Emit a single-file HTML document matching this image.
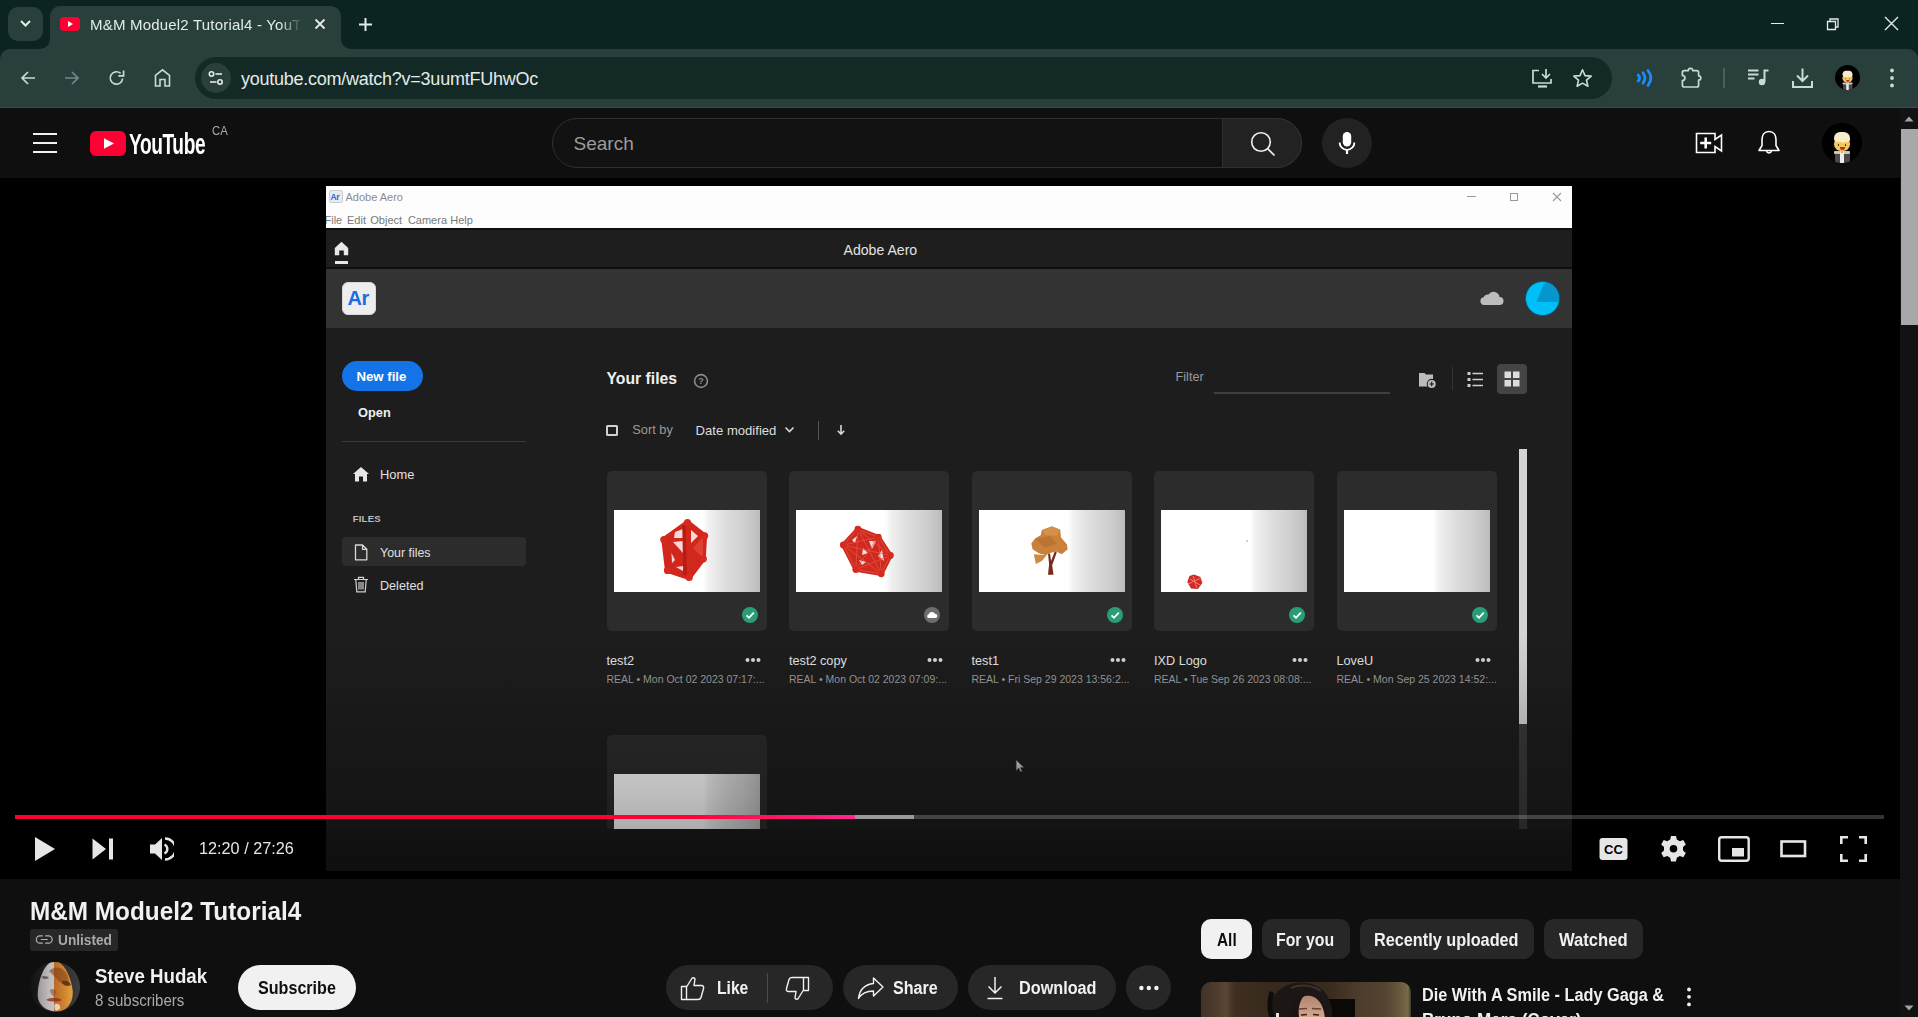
<!DOCTYPE html>
<html><head><meta charset="utf-8">
<style>
*{margin:0;padding:0;box-sizing:border-box}
html,body{width:1918px;height:1017px;overflow:hidden;background:#0f0f0f;font-family:"Liberation Sans",sans-serif}
.a{position:absolute}
svg{display:block}
.t{white-space:nowrap;line-height:1}
</style></head><body>
<div class="a" style="left:0px;top:0px;width:1918px;height:60px;background:#0c2421;"></div>
<div class="a" style="left:50px;top:6px;width:291px;height:44px;background:#293f3c;border-radius:10px 10px 0 0;"></div>
<div class="a" style="left:40px;top:39px;width:10px;height:10px;background:#293f3c;"></div>
<div class="a" style="left:30px;top:29px;width:20px;height:20px;background:#0c2421;border-radius:0 0 10px 0;"></div>
<div class="a" style="left:8px;top:7px;width:35px;height:34px;background:#293f3c;border-radius:10px;"></div>
<svg class="a" style="left:19px;top:19px" width="13" height="9" viewBox="0 0 13 9"><path d="M2 2 L6.5 6.5 L11 2" fill="none" stroke="#e3ebe9" stroke-width="2"/></svg>
<div class="a" style="left:341px;top:39px;width:10px;height:10px;background:#293f3c;"></div>
<div class="a" style="left:341px;top:29px;width:20px;height:20px;background:#0c2421;border-radius:0 0 0 10px;"></div>
<div class="a" style="left:60px;top:17px;width:20px;height:14px;background:#ff0033;border-radius:4px;"></div>
<svg class="a" style="left:60px;top:17px" width="20" height="14" viewBox="0 0 20 14"><path d="M8 4 L13 7 L8 10 Z" fill="#fff"/></svg>
<div class="a t" style="left:90px;top:17.30px;font-size:15px;color:#e3ebe9;letter-spacing:0.2px;width:212px;overflow:hidden;-webkit-mask-image:linear-gradient(to right,#000 190px,transparent 212px)">M&amp;M Moduel2 Tutorial4 - YouTube</div>
<svg class="a" style="left:313px;top:17px" width="14" height="14" viewBox="0 0 14 14"><path d="M2.5 2.5 L11.5 11.5 M11.5 2.5 L2.5 11.5" stroke="#e3ebe9" stroke-width="1.8"/></svg>
<svg class="a" style="left:358px;top:17px" width="15" height="15" viewBox="0 0 15 15"><path d="M7.5 1 V14 M1 7.5 H14" stroke="#e3ebe9" stroke-width="2"/></svg>
<div class="a" style="left:1771px;top:23px;width:13px;height:1.3px;background:#e3ebe9;"></div>
<svg class="a" style="left:1825px;top:16px" width="16" height="16" viewBox="0 0 16 16"><path d="M2.5 5.5 h8 v8 h-8 z M5 5.5 V3 h8 v8 h-2.5" fill="none" stroke="#e3ebe9" stroke-width="1.3"/></svg>
<svg class="a" style="left:1884px;top:16px" width="15" height="15" viewBox="0 0 15 15"><path d="M1 1 L14 14 M14 1 L1 14" stroke="#e3ebe9" stroke-width="1.4"/></svg>
<div class="a" style="left:0px;top:49px;width:1918px;height:59px;background:#293f3c;border-radius:10px 10px 0 0;"></div>
<div class="a" style="left:0px;top:107px;width:1918px;height:1px;background:#3a4c49;"></div>
<svg class="a" style="left:19px;top:69px" width="18" height="18" viewBox="0 0 18 18"><path d="M16 9 H3 M9 3 L3 9 L9 15" fill="none" stroke="#c9dad6" stroke-width="1.7"/></svg>
<svg class="a" style="left:63px;top:69px" width="18" height="18" viewBox="0 0 18 18"><path d="M2 9 H15 M9 3 L15 9 L9 15" fill="none" stroke="#73878a" stroke-width="1.7"/></svg>
<svg class="a" style="left:108px;top:69px" width="18" height="18" viewBox="0 0 18 18"><path d="M14.6 9.5 A6.2 6.2 0 1 1 12.6 4.4" fill="none" stroke="#c9dad6" stroke-width="1.7"/><path d="M15.6 1.5 V6.8 H10.3" fill="none" stroke="#c9dad6" stroke-width="1.7"/></svg>
<svg class="a" style="left:153px;top:68px" width="19" height="20" viewBox="0 0 19 20"><path d="M2.5 18 V7.5 L9.5 1.8 L16.5 7.5 V18 H12 V11.5 H7 V18 Z" fill="none" stroke="#c9dad6" stroke-width="1.6"/></svg>
<div class="a" style="left:195px;top:57px;width:1417px;height:42px;background:#132926;border-radius:21px;"></div>
<div class="a" style="left:201px;top:63px;width:30px;height:30px;background:#293f3c;border-radius:15px;"></div>
<svg class="a" style="left:206px;top:68px" width="20" height="20" viewBox="0 0 20 20"><circle cx="5.5" cy="6" r="2.2" fill="none" stroke="#e3ebe9" stroke-width="1.6"/><path d="M9.5 6 H16" stroke="#e3ebe9" stroke-width="1.6"/><circle cx="14" cy="14" r="2.2" fill="none" stroke="#e3ebe9" stroke-width="1.6"/><path d="M4 14 H10.5" stroke="#e3ebe9" stroke-width="1.6"/></svg>
<div class="a t" style="left:241px;top:69.66px;font-size:18px;color:#e3ebe9;letter-spacing:-0.25px">youtube.com/watch?v=3uumtFUhwOc</div>
<svg class="a" style="left:1531px;top:68px" width="23" height="21" viewBox="0 0 23 21"><path d="M8 2.5 H2 V15 H20 V11" fill="none" stroke="#c9dad6" stroke-width="1.7"/><path d="M15 1 V9.5 M11 6 L15 10 L19 6" fill="none" stroke="#c9dad6" stroke-width="1.7"/><path d="M7 18.5 H16" stroke="#c9dad6" stroke-width="2.2"/></svg>
<svg class="a" style="left:1572px;top:68px" width="21" height="20" viewBox="0 0 21 20"><path d="M10.5 1.8 L13 7.6 L19.2 8.1 L14.5 12.2 L15.9 18.3 L10.5 15.1 L5.1 18.3 L6.5 12.2 L1.8 8.1 L8 7.6 Z" fill="none" stroke="#c9dad6" stroke-width="1.6" stroke-linejoin="round"/></svg>
<svg class="a" style="left:1635px;top:69px" width="20" height="18" viewBox="0 0 20 18"><path d="M3.2 6 Q6 9 3.2 12" fill="none" stroke="#1a8cff" stroke-width="2.8" stroke-linecap="round"/><path d="M8 3.8 Q11.8 9 8 14.2" fill="none" stroke="#1a8cff" stroke-width="2.8" stroke-linecap="round"/><path d="M13 1.5 Q18.6 9 13 16.5" fill="none" stroke="#1a8cff" stroke-width="2.8" stroke-linecap="round"/></svg>
<svg class="a" style="left:1680px;top:66px" width="23" height="22" viewBox="0 0 23 22"><path d="M4.2 4.6 H8.3 A2.2 2.2 0 0 1 12.7 4.6 H16.8 Q18.6 4.6 18.6 6.4 V9.8 A2.2 2.2 0 0 1 18.6 14.2 V19.2 Q18.6 21 16.8 21 H4.2 Q2.4 21 2.4 19.2 V14.5 A2.4 2.4 0 0 0 2.4 9.5 V6.4 Q2.4 4.6 4.2 4.6 Z" fill="none" stroke="#c9dad6" stroke-width="1.7" stroke-linejoin="round"/></svg>
<div class="a" style="left:1723px;top:68px;width:2px;height:20px;background:#4b5e5b;"></div>
<svg class="a" style="left:1747px;top:68px" width="22" height="18" viewBox="0 0 22 18"><path d="M1 2.5 H11.5 M1 6.5 H11.5 M1 10.5 H7.5" stroke="#c9dad6" stroke-width="2"/><path d="M17.5 14 V2.5 H21.5" fill="none" stroke="#c9dad6" stroke-width="2"/><circle cx="15" cy="14" r="3.2" fill="#c9dad6"/></svg>
<svg class="a" style="left:1791px;top:67px" width="23" height="22" viewBox="0 0 23 22"><path d="M11.5 1.5 V14 M6 8.5 L11.5 14 L17 8.5" fill="none" stroke="#c9dad6" stroke-width="2"/><path d="M2 14 V20 H21 V14" fill="none" stroke="#c9dad6" stroke-width="2"/></svg>
<div class="a" style="left:1835px;top:65px;width:40px;height:40px;border-radius:50%;background:#000;overflow:hidden;transform:scale(0.625);transform-origin:0 0">
  <div class="a" style="left:12.5px;top:31px;width:15.5px;height:10px;background:#4c4a44"></div>
  <div class="a" style="left:12px;top:27.7px;width:16px;height:3.6px;border-radius:1px;background:#c9c7c0"></div>
  <div class="a" style="left:18.2px;top:28px;width:3.8px;height:13px;background:#ededed"></div>
  <div class="a" style="left:19px;top:27.5px;width:2.2px;height:2px;background:#f0a830"></div>
  <div class="a" style="left:12px;top:15px;width:16px;height:12.8px;border-radius:45% 45% 50% 50%;background:#f6c85a"></div>
  <div class="a" style="left:12px;top:9px;width:16px;height:9.5px;border-radius:8px 8px 3px 5px;background:#f6ecc8"></div>
  <div class="a" style="left:19px;top:16px;width:3px;height:3.5px;border-radius:0 0 2px 2px;background:#f6ecc8"></div>
  <div class="a" style="left:15.6px;top:21px;width:1.6px;height:1.6px;border-radius:50%;background:#222"></div>
  <div class="a" style="left:22.8px;top:21px;width:1.6px;height:1.6px;border-radius:50%;background:#222"></div>
  <div class="a" style="left:18.2px;top:24.3px;width:5.2px;height:2.9px;border-radius:0 0 3px 3px;background:#c02838"></div>
</div>
<svg class="a" style="left:1886px;top:67px" width="12" height="22" viewBox="0 0 12 22"><circle cx="6" cy="3.5" r="1.9" fill="#c9dad6"/><circle cx="6" cy="11" r="1.9" fill="#c9dad6"/><circle cx="6" cy="18.5" r="1.9" fill="#c9dad6"/></svg>
<div class="a" style="left:0px;top:108px;width:1918px;height:70px;background:#0f0f0f;"></div>
<div class="a" style="left:33px;top:133px;width:24px;height:2px;background:#f1f1f1;"></div>
<div class="a" style="left:33px;top:142px;width:24px;height:2px;background:#f1f1f1;"></div>
<div class="a" style="left:33px;top:151px;width:24px;height:2px;background:#f1f1f1;"></div>
<div class="a" style="left:90px;top:131px;width:36px;height:25px;background:#ff0033;border-radius:6px;"></div>
<svg class="a" style="left:90px;top:131px" width="36" height="25" viewBox="0 0 36 25"><path d="M14 7.2 L24 12.5 L14 17.8 Z" fill="#fff"/></svg>
<div class="a t" style="left:129px;top:130.48px;font-size:29.2px;font-weight:bold;color:#fff;letter-spacing:-0.6px;transform:scaleX(0.655);transform-origin:left top">YouTube</div>
<div class="a t" style="left:211.70px;top:124.79px;font-size:12.06px;color:#aaa;transform:scaleX(0.9422);transform-origin:0 0;">CA</div>
<div class="a" style="left:552px;top:118px;width:750px;height:50px;border-radius:25px;border:1px solid #303030;background:#121212"></div>
<div class="a" style="left:1222px;top:118px;width:80px;height:50px;border-radius:0 25px 25px 0;border:1px solid #303030;background:#222222"></div>
<div class="a t" style="left:573.5px;top:133.92px;font-size:19px;color:#9c9c9c;">Search</div>
<svg class="a" style="left:1249px;top:130px" width="28" height="28" viewBox="0 0 28 28"><circle cx="12" cy="12" r="9.3" fill="none" stroke="#f1f1f1" stroke-width="1.6"/><path d="M18.7 18.7 L25.5 25.5" stroke="#f1f1f1" stroke-width="1.7"/></svg>
<div class="a" style="left:1322px;top:118px;width:50px;height:50px;background:#222222;border-radius:25px;"></div>
<svg class="a" style="left:1335px;top:130px" width="24" height="28" viewBox="0 0 24 28"><rect x="7.8" y="2" width="8.4" height="14.5" rx="4.2" fill="#fff"/><path d="M4.6 12.5 A7.4 7.4 0 0 0 19.4 12.5" fill="none" stroke="#fff" stroke-width="1.8"/><path d="M12 19.8 V24" stroke="#fff" stroke-width="2.2"/></svg>
<svg class="a" style="left:1695px;top:132px" width="29" height="22" viewBox="0 0 29 22"><path d="M1.5 1.5 H20 V7.5 L26.5 3 V19 L20 14.5 V20.5 H1.5 Z" fill="none" stroke="#fff" stroke-width="1.6"/><path d="M10.7 5.5 V16.5 M5.2 11 H16.2" stroke="#fff" stroke-width="2.6"/></svg>
<svg class="a" style="left:1757px;top:129px" width="24" height="28" viewBox="0 0 24 28"><path d="M12 2.5 C7 2.5 5 6.5 5 10.5 V16.5 L2 21.5 H22 L19 16.5 V10.5 C19 6.5 17 2.5 12 2.5 Z" fill="none" stroke="#fff" stroke-width="1.6" stroke-linejoin="round"/><path d="M9.5 22 A2.6 2.6 0 0 0 14.5 22" fill="none" stroke="#fff" stroke-width="1.6"/></svg>
<div class="a" style="left:1822px;top:123px;width:40px;height:40px;border-radius:50%;background:#000;overflow:hidden;transform:scale(1.0);transform-origin:0 0">
  <div class="a" style="left:12.5px;top:31px;width:15.5px;height:10px;background:#4c4a44"></div>
  <div class="a" style="left:12px;top:27.7px;width:16px;height:3.6px;border-radius:1px;background:#c9c7c0"></div>
  <div class="a" style="left:18.2px;top:28px;width:3.8px;height:13px;background:#ededed"></div>
  <div class="a" style="left:19px;top:27.5px;width:2.2px;height:2px;background:#f0a830"></div>
  <div class="a" style="left:12px;top:15px;width:16px;height:12.8px;border-radius:45% 45% 50% 50%;background:#f6c85a"></div>
  <div class="a" style="left:12px;top:9px;width:16px;height:9.5px;border-radius:8px 8px 3px 5px;background:#f6ecc8"></div>
  <div class="a" style="left:19px;top:16px;width:3px;height:3.5px;border-radius:0 0 2px 2px;background:#f6ecc8"></div>
  <div class="a" style="left:15.6px;top:21px;width:1.6px;height:1.6px;border-radius:50%;background:#222"></div>
  <div class="a" style="left:22.8px;top:21px;width:1.6px;height:1.6px;border-radius:50%;background:#222"></div>
  <div class="a" style="left:18.2px;top:24.3px;width:5.2px;height:2.9px;border-radius:0 0 3px 3px;background:#c02838"></div>
</div>
<div class="a" style="left:1900px;top:108px;width:18px;height:909px;background:#121212;"></div>
<svg class="a" style="left:1903px;top:115px" width="12" height="8" viewBox="0 0 12 8"><path d="M1.5 6.5 L6 1.5 L10.5 6.5 Z" fill="#a3a3a3"/></svg>
<div class="a" style="left:1901px;top:129px;width:17px;height:196px;background:#a8a8a8;"></div>
<svg class="a" style="left:1903px;top:1004px" width="12" height="8" viewBox="0 0 12 8"><path d="M1.5 1.5 L6 6.5 L10.5 1.5 Z" fill="#a3a3a3"/></svg>
<div class="a" style="left:0px;top:178px;width:1900px;height:701px;background:#000;"></div>
<div class="a" style="left:326px;top:186px;width:1246px;height:685px;background:#1d1d1d;"></div>
<div class="a" style="left:326px;top:186px;width:1246px;height:42px;background:#fdfdfd;"></div>
<div class="a" style="left:329px;top:190px;width:14px;height:13px;border-radius:2px;background:#e8eaee;border:1px solid #c8ccd2"></div>
<div class="a t" style="left:330.5px;top:192.80px;font-size:8.5px;color:#1a6fd8;font-weight:bold;letter-spacing:-0.3px">Ar</div>
<div class="a t" style="left:345.5px;top:191.99px;font-size:11px;color:#8c8c8c;">Adobe Aero</div>
<div class="a" style="left:326px;top:210px;width:150px;height:17px;overflow:hidden">
<div class="a t" style="left:-1.5px;top:5.19px;font-size:11px;color:#787878;">File</div>
<div class="a t" style="left:21px;top:5.19px;font-size:11px;color:#787878;">Edit</div>
<div class="a t" style="left:44.3px;top:5.19px;font-size:11px;color:#787878;">Object</div>
<div class="a t" style="left:81.9px;top:5.19px;font-size:11px;color:#787878;">Camera</div>
<div class="a t" style="left:124.2px;top:5.19px;font-size:11px;color:#787878;">Help</div>
</div>
<div class="a" style="left:1467px;top:196px;width:9px;height:1.2px;background:#9a9a9a;"></div>
<div class="a" style="left:1510px;top:193px;width:8px;height:8px;border:1.2px solid #9a9a9a"></div>
<svg class="a" style="left:1552px;top:192px" width="10" height="10" viewBox="0 0 10 10"><path d="M1 1 L9 9 M9 1 L1 9" stroke="#9a9a9a" stroke-width="1.1"/></svg>
<div class="a" style="left:326px;top:228px;width:1246px;height:2px;background:#101010;"></div>
<div class="a" style="left:326px;top:230px;width:1246px;height:37px;background:#1e1e1e;"></div>
<div class="a" style="left:326px;top:267px;width:1246px;height:2px;background:#0e0e0e;"></div>
<svg class="a" style="left:334px;top:241px" width="15" height="15" viewBox="0 0 15 15"><path d="M0.8 7 L7.5 0.8 L14.2 7 V14.2 H9.8 V9.5 H5.2 V14.2 H0.8 Z" fill="#e8e8e8"/></svg>
<div class="a" style="left:335px;top:261px;width:13px;height:3px;background:#e8e8e8;"></div>
<div class="a t" style="left:843.5px;top:243.06px;font-size:14.1px;color:#e2e2e2;">Adobe Aero</div>
<div class="a" style="left:326px;top:269px;width:1246px;height:59px;background:#333333;"></div>
<div class="a" style="left:342px;top:282px;width:34px;height:33px;border-radius:6px;background:#eeeeef;border:1px solid #d8d8da"></div>
<div class="a t" style="left:347.5px;top:288.07px;font-size:20px;color:#1b6fe0;font-weight:bold;letter-spacing:-0.5px">Ar</div>
<svg class="a" style="left:1479px;top:289px" width="25" height="17" viewBox="0 0 25 17"><path d="M4.5 16 A4 4 0 0 1 4.5 8.2 A4.5 4.5 0 0 1 9.5 5.5 A6 6 0 0 1 20.5 8 A4 4 0 0 1 20.5 16 Z" fill="#bdbdbd"/></svg>
<div class="a" style="left:1525px;top:281px;width:35px;height:35px;border-radius:50%;background:#00bff7;overflow:hidden;border:1px solid #0a5a78"><svg class="a" style="left:0;top:0" width="35" height="35" viewBox="0 0 35 35"><path d="M10.5 20 L18 1.5 L35 0 L35 20 Z" fill="#0496cc"/></svg></div>
<div class="a" style="left:342px;top:361px;width:81px;height:30px;background:#1473e6;border-radius:15px;"></div>
<div class="a t" style="left:356.5px;top:369.83px;font-size:13.2px;color:#fff;font-weight:bold;">New file</div>
<div class="a t" style="left:358px;top:407.16px;font-size:12.8px;color:#f0f0f0;font-weight:bold;">Open</div>
<div class="a" style="left:342px;top:441px;width:184px;height:1px;background:#3a3a3a;"></div>
<svg class="a" style="left:352px;top:466px" width="18" height="16" viewBox="0 0 18 16"><path d="M1 8 L9 1 L17 8 H15 V15.5 H11 V10.5 H7 V15.5 H3 V8 Z" fill="#e6e6e6"/></svg>
<div class="a t" style="left:380px;top:469.08px;font-size:12.9px;color:#e0e0e0;">Home</div>
<div class="a t" style="left:352.7px;top:514.17px;font-size:9.6px;color:#bdbdbd;font-weight:bold;letter-spacing:0.2px">FILES</div>
<div class="a" style="left:342px;top:537px;width:184px;height:29px;background:#2c2c2c;border-radius:4px;"></div>
<svg class="a" style="left:354px;top:544px" width="14" height="17" viewBox="0 0 14 17"><path d="M1.5 1 H8.5 L12.8 5.3 V15.8 H1.5 Z M8.5 1 V5.3 H12.8" fill="none" stroke="#d8d8d8" stroke-width="1.3" stroke-linejoin="round"/></svg>
<div class="a t" style="left:380px;top:547.20px;font-size:12.4px;color:#e0e0e0;">Your files</div>
<svg class="a" style="left:353px;top:576px" width="16" height="17" viewBox="0 0 16 17"><path d="M1 3.5 H15 M5.5 3.3 V1.3 H10.5 V3.3 M2.8 3.8 L3.8 15.8 H12.2 L13.2 3.8 M6 6 V13.5 M8 6 V13.5 M10 6 V13.5" fill="none" stroke="#d0d0d0" stroke-width="1.2"/></svg>
<div class="a t" style="left:380px;top:580.33px;font-size:12.6px;color:#e0e0e0;">Deleted</div>
<div class="a t" style="left:606.5px;top:370.97px;font-size:15.75px;color:#efefef;font-weight:bold;">Your files</div>
<svg class="a" style="left:693px;top:373px" width="16" height="16" viewBox="0 0 16 16"><circle cx="8" cy="8" r="6.4" fill="none" stroke="#8a8a8a" stroke-width="1.6"/><text x="8" y="11.3" font-family="Liberation Sans" font-size="9" font-weight="bold" fill="#8a8a8a" text-anchor="middle">?</text></svg>
<div class="a" style="left:606px;top:424.5px;width:11.5px;height:11.5px;border:2px solid #d0d0d0;border-radius:1.5px"></div>
<div class="a t" style="left:632.3px;top:424.46px;font-size:12.8px;color:#9a9a9a;">Sort by</div>
<div class="a t" style="left:695.6px;top:424.21px;font-size:13.1px;color:#dedede;">Date modified</div>
<svg class="a" style="left:784px;top:425px" width="11" height="9" viewBox="0 0 11 9"><path d="M1.5 2.5 L5.5 6.5 L9.5 2.5" fill="none" stroke="#d8d8d8" stroke-width="1.6"/></svg>
<div class="a" style="left:818px;top:421px;width:1px;height:19px;background:#555;"></div>
<svg class="a" style="left:836px;top:424px" width="10" height="12" viewBox="0 0 10 12"><path d="M5 1 V10 M1.8 6.8 L5 10.2 L8.2 6.8" fill="none" stroke="#d8d8d8" stroke-width="1.6"/></svg>
<div class="a t" style="left:1175.5px;top:370.55px;font-size:12.7px;color:#9a9a9a;">Filter</div>
<div class="a" style="left:1214px;top:392px;width:176px;height:2px;background:#3f3f3f;"></div>
<svg class="a" style="left:1418px;top:370px" width="19" height="19" viewBox="0 0 19 19"><path d="M1 3 H6.5 L8 4.5 H15 V9 A5 5 0 0 0 9.5 16.5 H1 Z" fill="#bcbcbc"/><circle cx="13.7" cy="14" r="4" fill="#bcbcbc"/><path d="M13.7 11.7 V16.3 M11.4 14 H16" stroke="#1d1d1d" stroke-width="1.2"/></svg>
<div class="a" style="left:1452px;top:367px;width:1px;height:23px;background:#353535;"></div>
<svg class="a" style="left:1467px;top:371px" width="17" height="17" viewBox="0 0 17 17"><rect x="0.5" y="1" width="3" height="3" fill="#cfcfcf"/><rect x="0.5" y="7" width="3" height="3" fill="#cfcfcf"/><rect x="0.5" y="13" width="3" height="3" fill="#cfcfcf"/><path d="M5.5 2.5 H16 M5.5 8.5 H16 M5.5 14.5 H16" stroke="#cfcfcf" stroke-width="1.6"/></svg>
<div class="a" style="left:1497px;top:364px;width:30px;height:30px;background:#444444;border-radius:4px;"></div>
<svg class="a" style="left:1504px;top:371px" width="16" height="16" viewBox="0 0 16 16"><rect x="0.5" y="0.5" width="6.5" height="6.5" fill="#dcdcdc"/><rect x="9" y="0.5" width="6.5" height="6.5" fill="#dcdcdc"/><rect x="0.5" y="9" width="6.5" height="6.5" fill="#dcdcdc"/><rect x="9" y="9" width="6.5" height="6.5" fill="#dcdcdc"/></svg>
<div class="a" style="left:1519px;top:449px;width:8px;height:380px;background:#3a3a3a;"></div>
<div class="a" style="left:1519px;top:449px;width:8px;height:275px;background:#d4d4d4;"></div>
<div class="a" style="left:606.5px;top:471px;width:160px;height:160px;background:#2c2c2c;border-radius:5px;"></div>
<div class="a" style="left:613.5px;top:510px;width:146px;height:82px;background:linear-gradient(to right,#fff 0%,#fff 61%,#f0f0f0 65%,#dedede 76%,#d0d0d0 88%,#c2c2c2 97%,#bababa 100%);"></div>
<svg class="a" style="left:0px;top:0px" width="1918" height="1017" viewBox="0 0 1918 1017"><path d="M687.5 522.5 L704.6 535.8 L703.3 558.8 L689.2 577.5 L667.5 570.4 L663.8 539.6 Z" fill="#d2271c" stroke="#d2271c" stroke-width="5" stroke-linejoin="round"/><path d="M675 532 L683 529 L683 538 L674 538 Z M673 542 L683 541 L683 553 Z M671.5 553 L675 560 L672 563 Z M676 567 L684 566 L683 571 Z M691 530 L698 536 L691 543 Z" fill="#f6eeee" opacity=".9"/><path d="M684 525 L685 575" stroke="#b81c14" stroke-width="3.5"/><path d="M693 548 L703 537 L703 558 Z" fill="#e0493a" opacity=".8"/><circle cx="687.5" cy="522.5" r="3.6" fill="#d62a1e"/><circle cx="663.8" cy="539.6" r="3.6" fill="#d62a1e"/><circle cx="704.6" cy="535.8" r="3.6" fill="#d62a1e"/><circle cx="703.3" cy="558.8" r="3.6" fill="#d62a1e"/><circle cx="667.5" cy="570.4" r="3.6" fill="#d62a1e"/><circle cx="689.2" cy="577.5" r="3.6" fill="#d62a1e"/></svg>
<div class="a" style="left:741.5px;top:607px;width:16px;height:16px;background:#2a9d78;border-radius:50%;"></div>
<svg class="a" style="left:741.5px;top:607px" width="16" height="16" viewBox="0 0 16 16"><path d="M4.5 8.3 L7 10.8 L11.8 5.6" fill="none" stroke="#fff" stroke-width="1.8"/></svg>
<div class="a t" style="left:606.5px;top:655.25px;font-size:12.7px;color:#e4e4e4;">test2</div>
<svg class="a" style="left:744.5px;top:657px" width="16" height="6" viewBox="0 0 16 6"><circle cx="2.5" cy="3" r="2" fill="#d8d8d8"/><circle cx="8" cy="3" r="2" fill="#d8d8d8"/><circle cx="13.5" cy="3" r="2" fill="#d8d8d8"/></svg>
<div class="a t" style="left:606.5px;top:673.91px;font-size:10.5px;color:#9c9c9c;">REAL • Mon Oct 02 2023 07:17:...</div>
<div class="a" style="left:789px;top:471px;width:160px;height:160px;background:#2c2c2c;border-radius:5px;"></div>
<div class="a" style="left:796px;top:510px;width:146px;height:82px;background:linear-gradient(to right,#fff 0%,#fff 61%,#f0f0f0 65%,#dedede 76%,#d0d0d0 88%,#c2c2c2 97%,#bababa 100%);"></div>
<svg class="a" style="left:0px;top:0px" width="1918" height="1017" viewBox="0 0 1918 1017"><path d="M857.9 529.2 L878.3 537.1 L890.4 555.4 L881.25 573.75 L855.8 569.6 L843.3 545 Z" fill="#d02a1f" stroke="#d02a1f" stroke-width="4.5" stroke-linejoin="round"/><path d="M852 540 L857 536 L855 543 Z M869 541 L876 541 L872 549 Z M859 560 L866 562 L862 565 Z M878 556 L882 550 L884 561 Z M863 548 L868 553 L862 555 Z" fill="#f6eeee" opacity=".9"/><line x1="857.9" y1="529.2" x2="878.3" y2="537.1" stroke="#e4574a" stroke-width="0.9" opacity=".8"/><line x1="857.9" y1="529.2" x2="843.3" y2="545" stroke="#e4574a" stroke-width="0.9" opacity=".8"/><line x1="857.9" y1="529.2" x2="890.4" y2="555.4" stroke="#e4574a" stroke-width="0.9" opacity=".8"/><line x1="857.9" y1="529.2" x2="855.8" y2="569.6" stroke="#e4574a" stroke-width="0.9" opacity=".8"/><line x1="857.9" y1="529.2" x2="881.25" y2="573.75" stroke="#e4574a" stroke-width="0.9" opacity=".8"/><line x1="878.3" y1="537.1" x2="843.3" y2="545" stroke="#e4574a" stroke-width="0.9" opacity=".8"/><line x1="878.3" y1="537.1" x2="890.4" y2="555.4" stroke="#e4574a" stroke-width="0.9" opacity=".8"/><line x1="878.3" y1="537.1" x2="855.8" y2="569.6" stroke="#e4574a" stroke-width="0.9" opacity=".8"/><line x1="878.3" y1="537.1" x2="881.25" y2="573.75" stroke="#e4574a" stroke-width="0.9" opacity=".8"/><line x1="843.3" y1="545" x2="890.4" y2="555.4" stroke="#e4574a" stroke-width="0.9" opacity=".8"/><line x1="843.3" y1="545" x2="855.8" y2="569.6" stroke="#e4574a" stroke-width="0.9" opacity=".8"/><line x1="843.3" y1="545" x2="881.25" y2="573.75" stroke="#e4574a" stroke-width="0.9" opacity=".8"/><line x1="890.4" y1="555.4" x2="855.8" y2="569.6" stroke="#e4574a" stroke-width="0.9" opacity=".8"/><line x1="890.4" y1="555.4" x2="881.25" y2="573.75" stroke="#e4574a" stroke-width="0.9" opacity=".8"/><line x1="855.8" y1="569.6" x2="881.25" y2="573.75" stroke="#e4574a" stroke-width="0.9" opacity=".8"/><circle cx="857.9" cy="529.2" r="3.4" fill="#d62a1e"/><circle cx="878.3" cy="537.1" r="3.4" fill="#d62a1e"/><circle cx="843.3" cy="545" r="3.4" fill="#d62a1e"/><circle cx="890.4" cy="555.4" r="3.4" fill="#d62a1e"/><circle cx="855.8" cy="569.6" r="3.4" fill="#d62a1e"/><circle cx="881.25" cy="573.75" r="3.4" fill="#d62a1e"/></svg>
<div class="a" style="left:924px;top:607px;width:16px;height:16px;background:#6e6e6e;border-radius:50%;"></div>
<svg class="a" style="left:924px;top:607px" width="16" height="16" viewBox="0 0 16 16"><path d="M4 11 A2 2 0 0 1 4.5 7.5 A3.5 3.5 0 0 1 11 6.8 A2.2 2.2 0 0 1 12 11 Z" fill="#fff"/></svg>
<div class="a t" style="left:789px;top:655.25px;font-size:12.7px;color:#e4e4e4;">test2 copy</div>
<svg class="a" style="left:927px;top:657px" width="16" height="6" viewBox="0 0 16 6"><circle cx="2.5" cy="3" r="2" fill="#d8d8d8"/><circle cx="8" cy="3" r="2" fill="#d8d8d8"/><circle cx="13.5" cy="3" r="2" fill="#d8d8d8"/></svg>
<div class="a t" style="left:789px;top:673.91px;font-size:10.5px;color:#9c9c9c;">REAL • Mon Oct 02 2023 07:09:...</div>
<div class="a" style="left:971.5px;top:471px;width:160px;height:160px;background:#2c2c2c;border-radius:5px;"></div>
<div class="a" style="left:978.5px;top:510px;width:146px;height:82px;background:linear-gradient(to right,#fff 0%,#fff 61%,#f0f0f0 65%,#dedede 76%,#d0d0d0 88%,#c2c2c2 97%,#bababa 100%);"></div>
<svg class="a" style="left:0px;top:0px" width="1918" height="1017" viewBox="0 0 1918 1017"><path d="M1048.0 574.8 L1053.5 574.8 L1052.2 565.2 L1056.8 552.2 L1054.7 551.8 L1051.0 561.0 L1050.1 553.5 L1048.0 553.5 L1049.1 564.3 Z" fill="#7a2c1c"/><path d="M1041.8 530.1 L1051.8 526.3 L1060.2 529.6 L1061.0 537.6 L1066.9 544.3 L1067.7 549.3 L1061.8 554.3 L1056.8 551.8 L1051.8 552.6 L1048.5 553.5 L1046.0 555.2 L1039.3 553.5 L1032.6 549.3 L1031.3 543.4 L1035.1 538.4 L1040.9 535.1 Z" fill="#c9813c"/><path d="M1035.1 539.3 L1050.1 535.9 L1056.8 543.4 L1045.1 547.6 Z" fill="#b36c2c" opacity=".6"/><path d="M1042.6 530.5 L1051.8 526.7 L1059.3 530.1 L1056.8 535.9 L1045.1 535.1 Z" fill="#d8984e" opacity=".7"/><path d="M1033.8 554.3 L1046.8 555.2 L1041.8 561.0 L1035.9 563.9 Z" fill="#cf8842"/></svg>
<div class="a" style="left:1106.5px;top:607px;width:16px;height:16px;background:#2a9d78;border-radius:50%;"></div>
<svg class="a" style="left:1106.5px;top:607px" width="16" height="16" viewBox="0 0 16 16"><path d="M4.5 8.3 L7 10.8 L11.8 5.6" fill="none" stroke="#fff" stroke-width="1.8"/></svg>
<div class="a t" style="left:971.5px;top:655.25px;font-size:12.7px;color:#e4e4e4;">test1</div>
<svg class="a" style="left:1109.5px;top:657px" width="16" height="6" viewBox="0 0 16 6"><circle cx="2.5" cy="3" r="2" fill="#d8d8d8"/><circle cx="8" cy="3" r="2" fill="#d8d8d8"/><circle cx="13.5" cy="3" r="2" fill="#d8d8d8"/></svg>
<div class="a t" style="left:971.5px;top:673.91px;font-size:10.5px;color:#9c9c9c;">REAL • Fri Sep 29 2023 13:56:2...</div>
<div class="a" style="left:1154px;top:471px;width:160px;height:160px;background:#2c2c2c;border-radius:5px;"></div>
<div class="a" style="left:1161px;top:510px;width:146px;height:82px;background:linear-gradient(to right,#fff 0%,#fff 61%,#f0f0f0 65%,#dedede 76%,#d0d0d0 88%,#c2c2c2 97%,#bababa 100%);"></div>
<svg class="a" style="left:0px;top:0px" width="1918" height="1017" viewBox="0 0 1918 1017"><path d="M1194 574.5 L1200.5 577 L1202.3 583 L1198 588.9 L1191 588.5 L1187.3 582 L1189.5 576 Z" fill="#d02a22"/><path d="M1190 579 L1200 585 M1193 576 L1197 588 M1188 584 L1201 578" stroke="#f08070" stroke-width="1"/><circle cx="1247" cy="541" r="0.8" fill="#999"/></svg>
<div class="a" style="left:1289px;top:607px;width:16px;height:16px;background:#2a9d78;border-radius:50%;"></div>
<svg class="a" style="left:1289px;top:607px" width="16" height="16" viewBox="0 0 16 16"><path d="M4.5 8.3 L7 10.8 L11.8 5.6" fill="none" stroke="#fff" stroke-width="1.8"/></svg>
<div class="a t" style="left:1154px;top:655.25px;font-size:12.7px;color:#e4e4e4;">IXD Logo</div>
<svg class="a" style="left:1292px;top:657px" width="16" height="6" viewBox="0 0 16 6"><circle cx="2.5" cy="3" r="2" fill="#d8d8d8"/><circle cx="8" cy="3" r="2" fill="#d8d8d8"/><circle cx="13.5" cy="3" r="2" fill="#d8d8d8"/></svg>
<div class="a t" style="left:1154px;top:673.91px;font-size:10.5px;color:#9c9c9c;">REAL • Tue Sep 26 2023 08:08:...</div>
<div class="a" style="left:1336.5px;top:471px;width:160px;height:160px;background:#2c2c2c;border-radius:5px;"></div>
<div class="a" style="left:1343.5px;top:510px;width:146px;height:82px;background:linear-gradient(to right,#fff 0%,#fff 61%,#f0f0f0 65%,#dedede 76%,#d0d0d0 88%,#c2c2c2 97%,#bababa 100%);"></div>
<div class="a" style="left:1471.5px;top:607px;width:16px;height:16px;background:#2a9d78;border-radius:50%;"></div>
<svg class="a" style="left:1471.5px;top:607px" width="16" height="16" viewBox="0 0 16 16"><path d="M4.5 8.3 L7 10.8 L11.8 5.6" fill="none" stroke="#fff" stroke-width="1.8"/></svg>
<div class="a t" style="left:1336.5px;top:655.25px;font-size:12.7px;color:#e4e4e4;">LoveU</div>
<svg class="a" style="left:1474.5px;top:657px" width="16" height="6" viewBox="0 0 16 6"><circle cx="2.5" cy="3" r="2" fill="#d8d8d8"/><circle cx="8" cy="3" r="2" fill="#d8d8d8"/><circle cx="13.5" cy="3" r="2" fill="#d8d8d8"/></svg>
<div class="a t" style="left:1336.5px;top:673.91px;font-size:10.5px;color:#9c9c9c;">REAL • Mon Sep 25 2023 14:52:...</div>
<div class="a" style="left:606.5px;top:734.5px;width:160px;height:95px;border-radius:5px 5px 0 0;background:#2c2c2c"></div>
<div class="a" style="left:613.5px;top:773.5px;width:146px;height:56px;background:linear-gradient(to right,#fff 0%,#fff 61%,#f0f0f0 65%,#dedede 76%,#d0d0d0 88%,#c2c2c2 97%,#bababa 100%);"></div>
<div class="a" style="left:326px;top:829px;width:1246px;height:42px;background:#1a1a1a;"></div>
<svg class="a" style="left:1015px;top:759px" width="10" height="14" viewBox="0 0 10 14"><path d="M1.2 1 V11.5 L3.8 9 L5.6 12.8 L7 12.2 L5.3 8.5 L8.8 8.5 Z" fill="#c8c8c8" stroke="#555" stroke-width="0.6"/></svg>
<div class="a" style="left:0px;top:633px;width:1900px;height:246px;background:linear-gradient(to bottom,rgba(0,0,0,0) 0%,rgba(0,0,0,.08) 20%,rgba(0,0,0,.19) 41.6%,rgba(0,0,0,.25) 64%,rgba(0,0,0,.32) 80%,rgba(0,0,0,.45) 100%);"></div>
<div class="a" style="left:15px;top:815px;width:1869px;height:4px;background:rgba(255,255,255,.2);"></div>
<div class="a" style="left:15px;top:815px;width:899px;height:4px;background:#9a9a9a;"></div>
<div class="a" style="left:15px;top:815px;width:840px;height:4px;background:linear-gradient(to right,#ff0033 80%,#ff2791 100%);"></div>
<svg class="a" style="left:34px;top:836px" width="22" height="26" viewBox="0 0 22 26"><path d="M1 1 L21 13 L1 25 Z" fill="#e6e6e6"/></svg>
<svg class="a" style="left:92px;top:838px" width="22" height="22" viewBox="0 0 22 22"><path d="M0.5 0.5 L14 11 L0.5 21.5 Z" fill="#e6e6e6"/><rect x="17" y="0.5" width="4" height="21" fill="#e6e6e6"/></svg>
<svg class="a" style="left:149px;top:836px" width="25" height="26" viewBox="0 0 25 26"><path d="M1 8.5 H6 L13 2 V24 L6 17.5 H1 Z" fill="#e6e6e6"/><path d="M15.5 8.5 A5 5 0 0 1 15.5 17.5" fill="none" stroke="#e6e6e6" stroke-width="2.4"/><path d="M16 2.5 A10.5 10.5 0 0 1 16 23.5" fill="none" stroke="#e6e6e6" stroke-width="2.4"/></svg>
<div class="a t" style="left:199.40px;top:840.65px;font-size:16.72px;color:#e6e6e6;transform:scaleX(0.9722);transform-origin:0 0;">12:20 / 27:26</div>
<svg class="a" style="left:1599px;top:837px" width="30" height="24" viewBox="0 0 30 24"><rect x="0.5" y="1" width="28" height="22" rx="3" fill="#e6e6e6"/><text x="14.5" y="17" font-family="Liberation Sans" font-weight="bold" font-size="13" fill="#000" text-anchor="middle">CC</text></svg>
<svg class="a" style="left:1660px;top:835px" width="27" height="28" viewBox="0 0 27 28"><path d="M11 1 H16 L16.8 4.6 L19.8 6.3 L23.3 5.1 L25.8 9.4 L23 11.9 V15.5 L25.8 18 L23.3 22.3 L19.8 21.1 L16.8 22.8 L16 26.4 H11 L10.2 22.8 L7.2 21.1 L3.7 22.3 L1.2 18 L4 15.5 V11.9 L1.2 9.4 L3.7 5.1 L7.2 6.3 L10.2 4.6 Z" fill="#e6e6e6"/><circle cx="13.5" cy="13.7" r="3.8" fill="#000"/></svg>
<svg class="a" style="left:1718px;top:836px" width="32" height="26" viewBox="0 0 32 26"><rect x="1.2" y="1.2" width="29.5" height="23.5" rx="2.5" fill="none" stroke="#e6e6e6" stroke-width="2.4"/><rect x="14" y="12" width="12" height="8.5" fill="#e6e6e6"/></svg>
<svg class="a" style="left:1780px;top:840px" width="27" height="18" viewBox="0 0 27 18"><rect x="1.5" y="1.5" width="23.5" height="14.5" fill="none" stroke="#e6e6e6" stroke-width="2.6"/></svg>
<svg class="a" style="left:1840px;top:836px" width="27" height="26" viewBox="0 0 27 26"><path d="M1.3 8 V1.3 H8 M19 1.3 H25.7 V8 M25.7 18 V24.7 H19 M8 24.7 H1.3 V18" fill="none" stroke="#e6e6e6" stroke-width="2.6"/></svg>
<div class="a t" style="left:30.00px;top:898.48px;font-size:26.60px;color:#f1f1f1;font-weight:bold;transform:scaleX(0.9148);transform-origin:0 0;">M&amp;M Moduel2 Tutorial4</div>
<div class="a" style="left:30px;top:929px;width:88px;height:22px;background:#272727;border-radius:3px;"></div>
<svg class="a" style="left:35px;top:933px" width="19" height="13" viewBox="0 0 19 13"><path d="M7.8 2.8 H5 A3.7 3.7 0 0 0 5 10.2 H7.8 M10.2 2.8 H13.5 A3.7 3.7 0 0 1 13.5 10.2 H10.2 M5.8 6.5 H12.7" fill="none" stroke="#b0b0b0" stroke-width="1.2"/></svg>
<div class="a t" style="left:57.70px;top:931.63px;font-size:15.55px;color:#aaa;font-weight:bold;transform:scaleX(0.8801);transform-origin:0 0;">Unlisted</div>
<svg class="a" style="left:30px;top:962px" width="50" height="50" viewBox="0 0 50 50"><defs><clipPath id="cav"><circle cx="25" cy="25" r="25"/></clipPath><linearGradient id="cbg" x1="0" x2="1"><stop offset="0" stop-color="#121212"/><stop offset="1" stop-color="#3e3e3e"/></linearGradient><linearGradient id="cface" x1="0" x2="1"><stop offset="0" stop-color="#9c9899"/><stop offset=".3" stop-color="#bdb9b8"/><stop offset=".45" stop-color="#c9c4c1"/><stop offset=".47" stop-color="#b86a28"/><stop offset=".75" stop-color="#d0842e"/><stop offset="1" stop-color="#e4a23c"/></linearGradient></defs><g clip-path="url(#cav)"><rect width="50" height="50" fill="url(#cbg)"/><path d="M25 -1 C34 -1 41 16 42.6 28 C44 41 36 49.5 27 49.5 C16 49.5 7.7 43 7.7 33 C7.7 18 15 -1 25 -1 Z" fill="url(#cface)"/><path d="M19 9 C24 4 32 4 37 12 L40 22 C36 24 30 22 26 16 Z" fill="#7a3a14" opacity=".55"/><path d="M32 19 C36 18 40 20 41 23 C38 25 34 24 32 21 Z" fill="#5a2a10" opacity=".8"/><path d="M11 15 C14 13 18 14 19 16 C16 18 13 17 11 15 Z" fill="#3a3030" opacity=".6"/><path d="M16 38 C20 35 27 35 32 38 C28 40 21 40 16 38 Z" fill="#8a3020" opacity=".8"/><path d="M20 28 C22 26 25 27 26 30 L24 35 C22 33 20 31 20 28 Z" fill="#7a3a20" opacity=".5"/><path d="M25 42 C28 41 31 43 30 47 L26 49 C24 47 24 44 25 42 Z" fill="#e8e2e0" opacity=".85"/></g></svg>
<div class="a t" style="left:95.00px;top:965.71px;font-size:20.78px;color:#f1f1f1;font-weight:bold;transform:scaleX(0.8997);transform-origin:0 0;">Steve Hudak</div>
<div class="a t" style="left:95.00px;top:992.71px;font-size:15.70px;color:#aaa;transform:scaleX(0.9569);transform-origin:0 0;">8 subscribers</div>
<div class="a" style="left:238px;top:965px;width:118px;height:45px;background:#f1f1f1;border-radius:22.5px;"></div>
<div class="a t" style="left:258.10px;top:979.37px;font-size:18.46px;color:#0f0f0f;font-weight:bold;transform:scaleX(0.8739);transform-origin:0 0;">Subscribe</div>
<div class="a" style="left:666px;top:965px;width:167px;height:45px;background:#272727;border-radius:22.5px;"></div>
<div class="a" style="left:767px;top:973px;width:1px;height:30px;background:#4a4a4a;"></div>
<svg class="a" style="left:680px;top:976px" width="26" height="25" viewBox="0 0 26 25"><path d="M1.5 10.5 H6.5 V23.5 H1.5 Z M6.5 11 L11.5 3 C12 1.5 14.5 1.2 15 3 L14 9.5 H21.5 C23.2 9.5 24 11 23.5 12.5 L21 21.5 C20.6 23 19.5 23.5 18 23.5 H6.5" fill="none" stroke="#f1f1f1" stroke-width="1.4" stroke-linejoin="round"/></svg>
<div class="a t" style="left:716.80px;top:978.91px;font-size:18.90px;color:#f1f1f1;font-weight:bold;transform:scaleX(0.8282);transform-origin:0 0;">Like</div>
<svg class="a" style="left:784px;top:976px" width="26" height="25" viewBox="0 0 26 25"><path d="M24.5 14.5 H19.5 V1.5 H24.5 Z M19.5 14 L14.5 22 C14 23.5 11.5 23.8 11 22 L12 15.5 H4.5 C2.8 15.5 2 14 2.5 12.5 L5 3.5 C5.4 2 6.5 1.5 8 1.5 H19.5" fill="none" stroke="#f1f1f1" stroke-width="1.4" stroke-linejoin="round"/></svg>
<div class="a" style="left:843px;top:965px;width:115px;height:45px;background:#272727;border-radius:22.5px;"></div>
<svg class="a" style="left:857px;top:976px" width="28" height="24" viewBox="0 0 28 24"><path d="M16.5 2 L26 11 L16.5 20 V15 C9 15 4.5 17.5 1.5 22.5 C2.5 14.5 7 8.5 16.5 7.5 Z" fill="none" stroke="#f1f1f1" stroke-width="1.4" stroke-linejoin="round"/></svg>
<div class="a t" style="left:893.20px;top:978.91px;font-size:18.90px;color:#f1f1f1;font-weight:bold;transform:scaleX(0.8529);transform-origin:0 0;">Share</div>
<div class="a" style="left:968px;top:965px;width:148px;height:45px;background:#272727;border-radius:22.5px;"></div>
<svg class="a" style="left:986px;top:976px" width="18" height="24" viewBox="0 0 18 24"><path d="M9 1 V17 M2.5 10.5 L9 17 L15.5 10.5" fill="none" stroke="#f1f1f1" stroke-width="1.5"/><path d="M1.5 22.5 H16.5" stroke="#f1f1f1" stroke-width="1.5"/></svg>
<div class="a t" style="left:1018.70px;top:978.91px;font-size:18.90px;color:#f1f1f1;font-weight:bold;transform:scaleX(0.8590);transform-origin:0 0;">Download</div>
<div class="a" style="left:1126px;top:965px;width:45px;height:45px;background:#272727;border-radius:50%;"></div>
<svg class="a" style="left:1137px;top:984px" width="24" height="8" viewBox="0 0 24 8"><circle cx="4.4" cy="4" r="2.2" fill="#f1f1f1"/><circle cx="11.8" cy="4" r="2.2" fill="#f1f1f1"/><circle cx="19.4" cy="4" r="2.2" fill="#f1f1f1"/></svg>
<div class="a" style="left:1201px;top:919px;width:51px;height:40px;background:#f1f1f1;border-radius:10px;"></div>
<div class="a t" style="left:1216.60px;top:929.88px;font-size:19.04px;color:#0f0f0f;font-weight:bold;transform:scaleX(0.8083);transform-origin:0 0;">All</div>
<div class="a" style="left:1262px;top:919px;width:88px;height:40px;background:#272727;border-radius:10px;"></div>
<div class="a t" style="left:1276.40px;top:929.88px;font-size:19.04px;color:#f1f1f1;font-weight:bold;transform:scaleX(0.8326);transform-origin:0 0;">For you</div>
<div class="a" style="left:1360px;top:919px;width:174px;height:40px;background:#272727;border-radius:10px;"></div>
<div class="a t" style="left:1374.00px;top:929.88px;font-size:19.04px;color:#f1f1f1;font-weight:bold;transform:scaleX(0.8542);transform-origin:0 0;">Recently uploaded</div>
<div class="a" style="left:1544px;top:919px;width:99px;height:40px;background:#272727;border-radius:10px;"></div>
<div class="a t" style="left:1558.90px;top:929.88px;font-size:19.04px;color:#f1f1f1;font-weight:bold;transform:scaleX(0.8736);transform-origin:0 0;">Watched</div>
<div class="a" style="left:1201px;top:982px;width:210px;height:40px;border-radius:10px 10px 0 0;overflow:hidden">
<svg width="210" height="40" viewBox="0 0 210 40" style="display:block">
<defs><linearGradient id="twall" x1="0" x2="1"><stop offset="0" stop-color="#433326"/><stop offset=".07" stop-color="#4d3b2c"/><stop offset=".12" stop-color="#5a4634"/><stop offset=".16" stop-color="#3f2f22"/><stop offset=".33" stop-color="#38291d"/><stop offset=".62" stop-color="#3a2b1f"/><stop offset=".73" stop-color="#4a3a2a"/><stop offset=".88" stop-color="#554431"/><stop offset=".94" stop-color="#66563c"/><stop offset=".985" stop-color="#7a6a4a"/><stop offset="1" stop-color="#3a3a30"/></linearGradient>
<linearGradient id="tskin" x1="0" y1="0" x2="0" y2="1"><stop offset="0" stop-color="#b08470"/><stop offset="1" stop-color="#d9ae96"/></linearGradient></defs>
<rect width="210" height="40" fill="url(#twall)"/>
<rect x="127" y="17" width="27" height="25" fill="#0b0908"/>
<path d="M69 40 C66 20 74 2 99 0.5 C122 0 133 16 131 40 Z" fill="#1c1714"/>
<path d="M90 6 C100 2 112 3 120 9" fill="none" stroke="#4a3e38" stroke-width="2" opacity=".7"/>
<path d="M92 40 C92 28 95 18 104 14 C114 12 124 20 124 40 Z" fill="url(#tskin)"/>
<path d="M88 40 C88 26 92 14 106 10 C98 18 96 28 99 40 Z" fill="#1a1512"/>
<path d="M98 27 L106 26.5 M111 26.5 L120 27" stroke="#6a4232" stroke-width="1.6"/>
<path d="M100 33 L106 32.5 M112 32.5 L118 33" stroke="#3a2018" stroke-width="1.6"/>
<path d="M71 10 C68 18 68 28 72 40" fill="none" stroke="#0e0c0b" stroke-width="5"/>
<rect x="75" y="31" width="3" height="9" fill="#e4e4e4"/>
</svg></div>
<div class="a t" style="left:1421.50px;top:986.23px;font-size:18.75px;color:#f1f1f1;font-weight:bold;transform:scaleX(0.8686);transform-origin:0 0;">Die With A Smile - Lady Gaga &amp;</div>
<div class="a t" style="left:1421.50px;top:1010.63px;font-size:18.75px;color:#f1f1f1;font-weight:bold;transform:scaleX(0.9113);transform-origin:0 0;">Bruno Mars (Cover)</div>
<svg class="a" style="left:1684px;top:986px" width="10" height="22" viewBox="0 0 10 22"><circle cx="5" cy="3.5" r="1.9" fill="#f1f1f1"/><circle cx="5" cy="10.8" r="1.9" fill="#f1f1f1"/><circle cx="5" cy="18.4" r="1.9" fill="#f1f1f1"/></svg>
</body></html>
